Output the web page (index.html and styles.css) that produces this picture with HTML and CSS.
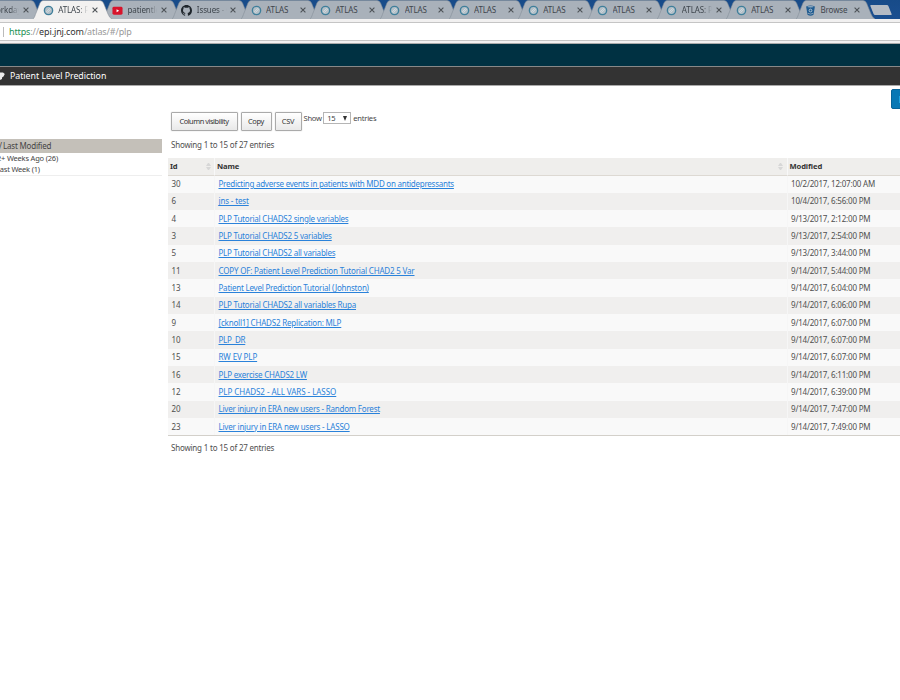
FILE: index.html
```html
<!DOCTYPE html>
<html lang="en">
<head>
<meta charset="utf-8">
<title>ATLAS: Patient Level Prediction</title>
<link rel="stylesheet" href="styles.css">
</head>
<body>
<svg class="defs" width="0" height="0">
  <symbol id="tabshape" viewBox="0 0 79 19"><path d="M0 19 C2 17 2 15 3 13 L7 3 Q8 0.5 10 0.5 H67 Q69.500 0.500 70.500 3 L75 14 Q76.500 18 79 19 Z" fill="currentColor"/><path d="M0 19 C2 17 2 15 3 13 L7 3 Q8 0.500 10 0.500 H67 Q69.500 0.500 70.500 3 L75 14 Q76.500 18 79 19" fill="none" stroke="#858e98" stroke-width=".6"/></symbol>
  <symbol id="atlas" viewBox="0 0 12 12"><circle cx="6" cy="6" r="4.500" fill="#b3c0c8" stroke="#3f7f9b" stroke-width="1.500"/><path d="M3.500 7.500 7.500 3.500M4.500 8.500l4-4" stroke="#e1e6e9" stroke-width=".7"/></symbol>
  <symbol id="x" viewBox="0 0 6 6"><path d="M.6.6 5.400 5.400M5.400.6.6 5.400" stroke="#4d5257" stroke-width="1.100"/></symbol>
  <symbol id="youtube" viewBox="0 0 12 12"><rect x=".5" y="2" width="11" height="8.500" rx="1.600" fill="#d8142b"/><path d="M5 4.500v3.400L7.800 6.200z" fill="#fff"/></symbol>
  <symbol id="github" viewBox="0 0 16 16"><path fill="#1f262c" d="M8 0C3.580 0 0 3.580 0 8c0 3.540 2.290 6.530 5.470 7.590.4.070.55-.17.55-.38 0-.19-.01-.82-.01-1.490-2.010.37-2.530-.49-2.690-.94-.09-.23-.48-.94-.82-1.130-.28-.15-.68-.52-.01-.53.63-.01 1.080.58 1.230.82.720 1.210 1.870.87 2.330.66.070-.52.280-.87.510-1.070-1.780-.2-3.640-.89-3.640-3.950 0-.87.310-1.590.82-2.150-.08-.2-.36-1.020.08-2.120 0 0 .67-.21 2.200.82.640-.18 1.320-.27 2-.27s1.360.09 2 .27c1.530-1.040 2.200-.82 2.200-.82.440 1.100.16 1.920.08 2.120.51.560.82 1.270.82 2.150 0 3.070-1.870 3.750-3.650 3.950.29.250.54.730.54 1.480 0 1.070-.01 1.930-.01 2.200 0 .21.150.46.550.38A8.010 8.010 0 0 0 16 8c0-4.420-3.580-8-8-8z"/></symbol>
  <symbol id="bitbucket" viewBox="0 0 12 12"><path d="M1.200 1.500Q6-.5 10.800 1.500L9.300 10.700Q6 13 2.700 10.700z" fill="#205c91"/><ellipse cx="6" cy="1.900" rx="3.500" ry=".7" fill="#8fa9c0"/><circle cx="6" cy="6" r="1.500" fill="none" stroke="#c4d0da" stroke-width=".9"/><path d="M3 9Q6 10.800 9 9" fill="none" stroke="#a9b7c3" stroke-width=".8"/></symbol>
</svg>
<header>
  <nav class="tabs" id="tabs"></nav>
  <div class="toolbar"><div class="omnibox"><span class="sep"></span><p><span class="secure">https</span><span class="dim">://</span>epi.jnj.com<span class="dim">/atlas/#/plp</span></p></div></div>
</header>
<div class="brand"></div>
<div class="heading"><svg class="hicon" viewBox="0 0 6 9"><path d="M0 .5H3L4.800 2 3.500 4.500 2 5.500V7L0 8z" fill="#eee"/></svg><h1>Patient Level Prediction</h1></div>
<div class="actions"><button class="new">New</button></div>
<main>
  <aside>
    <h2><span class="slash">/</span>Last Modified</h2>
    <ul><li class="weeks">2+ Weeks Ago (26)</li><li class="last">Last Week (1)</li></ul>
  </aside>
  <section>
    <div class="controls"><button class="b1">Column visibility</button><button class="b2">Copy</button><button class="b3">CSV</button>
      <label>Show<span class="select">15<i></i></span>entries</label></div>
    <p class="info">Showing 1 to 15 of 27 entries</p>
    <table>
      <colgroup><col class="cid"><col class="cname"><col></colgroup>
      <thead><tr><th>Id<i class="sort"></i></th><th>Name<i class="sort"></i></th><th>Modified</th></tr></thead>
      <tbody id="rows"></tbody>
    </table>
    <p class="info bottom">Showing 1 to 15 of 27 entries</p>
  </section>
</main>
<script src="app.js"></script>
</body>
</html>
```
FILE: styles.css
```css
* { box-sizing: border-box; }
body { margin: 0; width: 900px; height: 700px; overflow: hidden; background: #fff; color: #4f4f4f; font: 8px/12px "Noto Sans", "Open Sans", sans-serif; letter-spacing: -.2px; }
h1, h2, p, ul { margin: 0; padding: 0; font-weight: 400; }
ul { list-style: none; }
.defs { position: absolute; }
.tabs { height: 19px; background: linear-gradient(#174b89, #1b4f90); display: flex; overflow: hidden; letter-spacing: -.1px; }
.tab { flex: none; width: 69.300px; height: 19px; position: relative; display: flex; align-items: center; color: #a9b1ba; }
.tab.active { color: #f2f1f0; z-index: 2; }
.tab:first-child { margin-left: -36px; }
.shape { position: absolute; left: 0; top: 0; width: 79px; height: 19px; }
.fav { position: relative; width: 11px; height: 11px; margin: 1px 0 0 9.500px; flex: none; }
.tab span { position: relative; margin-left: 4.400px; width: 30px; color: #3f464d; white-space: nowrap; overflow: hidden; line-height: 18px; padding-top: 1px; }
.tab.long span { -webkit-mask-image: linear-gradient(90deg, #000 70%, transparent 100%); mask-image: linear-gradient(90deg, #000 70%, transparent 100%); }
.x { position: relative; width: 6px; height: 6px; margin: 1px 0 0 3.700px; flex: none; }
.newtab { flex: none; width: 18px; height: 10px; margin: 5px 0 0 7.500px; background: #b4bbc4; transform: skewX(22deg); border-radius: 1px; }
.toolbar { height: 25px; background: #f1f0f0; padding-top: 3px; border-bottom: 1px solid #aaa; }
.omnibox { height: 19px; background: #fff; border: 1px solid #c5c5c5; border-width: 1px 0; display: flex; align-items: center; font-size: 9px; letter-spacing: -.12px; color: #333; }
.sep { width: 1px; height: 10px; background: #bbb; margin: 0 5px 0 3px; }
.secure { color: #239254; }
.dim { color: #999; }
.brand { height: 22px; background: #003142; }
.heading { height: 20px; background: #333; border-top: 1px solid #888; border-bottom: 1px solid #aaa; color: #fff; display: flex; align-items: center; }
.hicon { width: 6px; height: 9px; margin-right: 4px; }
h1 { font-size: 8.800px; letter-spacing: -.02px; }
.actions { height: 24px; padding: 3px 0 0 891px; overflow: hidden; }
.new { height: 20px; width: 35px; background: #0878b5; border: 1px solid #08649a; border-radius: 2px; color: #fff; font: 8px "Noto Sans"; padding: 0 0 0 7px; text-align: left; }
main { display: flex; gap: 9px; }
aside { width: 162px; flex: none; padding-top: 29px; }
h2 { height: 14px; background: #c4c0b9; font-size: 8px; line-height: 14px; color: #444; letter-spacing: -.2px; white-space: nowrap; display: flex; }
.slash { width: 4px; margin-left: -1px; }
aside ul { border-bottom: 1px solid #eee; height: 23px; }
li { font-size: 7.500px; line-height: 11px; white-space: nowrap; color: #444; }
.weeks { margin-left: -3px; }
.last { margin-left: -4px; }
section { width: 729px; flex: none; padding-top: 2px; }
.controls { height: 19px; display: flex; gap: 3px; }
.controls button { height: 19px; padding: 0 0 1px; border: 1px solid #aaa; border-radius: 1px; background: linear-gradient(#fff, #e9e9e9); color: #333; font: 7.400px "Noto Sans"; letter-spacing: -.36px; box-shadow: 0 0 1px #aaa; position: relative; left: -.5px; }
.controls .b1 { width: 67px; letter-spacing: -.45px; }
.b2 { width: 31px; }
.controls .b3 { width: 27px; letter-spacing: -.3px; }
.controls label { display: flex; height: 12px; align-items: center; font-size: 7.600px; letter-spacing: -.25px; color: #444; margin-left: -1.500px; }
.select { display: flex; width: 28px; height: 12px; border: 1px solid #b5b5b5; margin: 0 2px 0 1.500px; padding: 0 3px; align-items: center; justify-content: space-between; }
.select i { border: 2.500px solid transparent; border-top: 5px solid #333; border-bottom: 0; }
.info { height: 27px; padding-top: 8px; }
table { width: 733px; margin-left: -3px; border-collapse: separate; border-spacing: 0; table-layout: fixed; border-bottom: 1px solid #d3d0ca; }
.cid { width: 47px; }
.cname { width: 572.500px; }
th { height: 17.500px; padding: 0 2px; text-align: left; background: #efeeec; border-bottom: 1px solid #ddd9d3; border-right: 1px solid #f8f8f8; position: relative; color: #333; font-size: 7.600px; letter-spacing: -.12px; }
td { height: 17.330px; padding: 0 3.500px; border-right: 1px solid #f6f6f6; background: #f9f9f9; white-space: nowrap; line-height: 12px; }
tr:nth-child(even) td { background: #f0efee; }
td a { color: #2a82da; text-decoration: underline; }
.sort { position: absolute; right: 3.500px; top: 4.500px; width: 5px; height: 8px; }
.sort::before, .sort::after { content: ""; display: block; border: 2.500px solid transparent; }
.sort::before { border-top: 0; border-bottom: 3.500px solid #d7d7d7; margin-bottom: 1px; }
.sort::after { border-bottom: 0; border-top: 3.500px solid #d7d7d7; }
.info.bottom { padding-top: 6px; }
```
FILE: app.js
```js
const tabs = [["Workday", "atlas"], ["ATLAS: P", "atlas"], ["patientlev", "youtube"], ["Issues - O", "github"],
  ["ATLAS", "atlas"], ["ATLAS", "atlas"], ["ATLAS", "atlas"], ["ATLAS", "atlas"], ["ATLAS", "atlas"], ["ATLAS", "atlas"],
  ["ATLAS: P", "atlas"], ["ATLAS", "atlas"], ["Browse", "bitbucket"]];
document.getElementById("tabs").innerHTML = tabs.map(([t, icon], i) =>
  `<div class="tab${i === 1 ? " active" : ""}${t === "ATLAS" || t === "Browse" ? "" : " long"}"><svg class="shape"><use href="#tabshape"/></svg><svg class="fav"><use href="#${icon}"/></svg><span>${t}</span><svg class="x"><use href="#x"/></svg></div>`
).join("") + '<div class="newtab"></div>';

// id, name, modified, letter spacing of the name
const rows = [
  [30, "Predicting adverse events in patients with MDD on antidepressants", "10/2/2017, 12:07:00 AM", -.25],
  [6, "jns - test", "10/4/2017, 6:56:00 PM", -.15],
  [4, "PLP Tutorial CHADS2 single variables", "9/13/2017, 2:12:00 PM", -.22],
  [3, "PLP Tutorial CHADS2 5 variables", "9/13/2017, 2:54:00 PM", -.22],
  [5, "PLP Tutorial CHADS2 all variables", "9/13/2017, 3:44:00 PM", -.22],
  [11, "COPY OF: Patient Level Prediction Tutorial CHAD2 5 Var", "9/14/2017, 5:44:00 PM", -.18],
  [13, "Patient Level Prediction Tutorial (Johnston)", "9/14/2017, 6:04:00 PM", -.215],
  [14, "PLP Tutorial CHADS2 all variables Rupa", "9/14/2017, 6:06:00 PM", -.21],
  [9, "[cknoll1] CHADS2 Replication: MLP", "9/14/2017, 6:07:00 PM", -.19],
  [10, "PLP_DR", "9/14/2017, 6:07:00 PM", -.25],
  [15, "RW EV PLP", "9/14/2017, 6:07:00 PM", -.12],
  [16, "PLP exercise CHADS2 LW", "9/14/2017, 6:11:00 PM", -.2],
  [12, "PLP CHADS2 - ALL VARS - LASSO", "9/14/2017, 6:39:00 PM", -.05],
  [20, "Liver injury in ERA new users - Random Forest", "9/14/2017, 7:47:00 PM", -.22],
  [23, "Liver injury in ERA new users - LASSO", "9/14/2017, 7:49:00 PM", -.2]];
document.getElementById("rows").innerHTML = rows.map(([id, name, date, ls]) =>
  `<tr><td>${id}</td><td><a style="letter-spacing:${ls}px">${name}</a></td><td>${date}</td></tr>`).join("");
```
